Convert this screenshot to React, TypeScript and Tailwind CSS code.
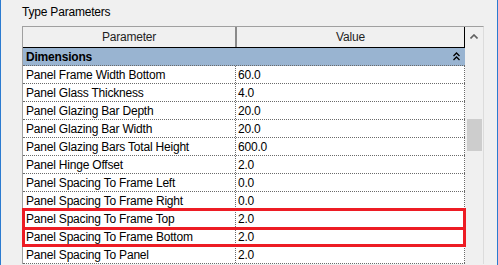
import React from 'react';

const rows = [
  { name: 'Panel Frame Width Bottom', value: '60.0' },
  { name: 'Panel Glass Thickness', value: '4.0' },
  { name: 'Panel Glazing Bar Depth', value: '20.0' },
  { name: 'Panel Glazing Bar Width', value: '20.0' },
  { name: 'Panel Glazing Bars Total Height', value: '600.0' },
  { name: 'Panel Hinge Offset', value: '2.0' },
  { name: 'Panel Spacing To Frame Left', value: '0.0' },
  { name: 'Panel Spacing To Frame Right', value: '0.0' },
  { name: 'Panel Spacing To Frame Top', value: '2.0' },
  { name: 'Panel Spacing To Frame Bottom', value: '2.0' },
  { name: 'Panel Spacing To Panel', value: '2.0' },
];

function CollapseIcon() {
  return (
    <svg width="7" height="9" viewBox="0 0 7 9" className="block">
      <path d="M0.5 4 L3.5 1 L6.5 4" fill="none" stroke="#000" strokeWidth="1.3" />
      <path d="M0.5 8 L3.5 5 L6.5 8" fill="none" stroke="#000" strokeWidth="1.3" />
    </svg>
  );
}

function UpArrow() {
  return (
    <svg width="8" height="5" viewBox="0 0 8 5" className="block">
      <path d="M0.5 4.5 L4 1 L7.5 4.5" fill="none" stroke="#606060" strokeWidth="1.6" />
    </svg>
  );
}

export default function App() {
  return (
    <div
      className="relative w-[498px] h-[265px] overflow-hidden bg-[#f0f0f0] border-x border-[#2b7bd0] text-[12px] tracking-[-0.2px] text-black"
      style={{ fontFamily: '"Liberation Sans", Arial, sans-serif' }}
    >
      {/* Section label */}
      <div className="h-[26px] pl-[21px] pt-[5px] leading-[15px]">Type Parameters</div>

      {/* Properties grid */}
      <div className="ml-[21px] w-[462px] border-l border-t border-r border-l-[#a0a0a0] border-t-[#a0a0a0] border-r-[#dcdcdc] flex">
        <div className="w-[442px] bg-white">
          {/* Header */}
          <div className="flex h-[21px] bg-[#f0f0f0] border-b border-black text-[#1f1f1f]">
            <div className="w-[214px] border-r-2 border-[#8a8a8a] flex items-center justify-center">Parameter</div>
            <div className="w-[228px] border-r border-black flex items-center justify-center">Value</div>
          </div>

          {/* Group row */}
          <div className="flex items-center h-[18px] bg-[#99b4d1] border-b border-dotted border-[#6a6a6a] pl-[3px] pr-[5px] font-bold">
            <span className="flex-1">Dimensions</span>
            <CollapseIcon />
          </div>

          {rows.map((row) => (
            <div key={row.name} className="flex h-[18px] border-b border-dotted border-[#6a6a6a]">
              <div className="w-[213px] border-r border-dotted border-[#6a6a6a] pl-[3px] flex items-center whitespace-nowrap">
                {row.name}
              </div>
              <div className="w-[229px] border-r border-dotted border-[#6a6a6a] pl-[2px] flex items-center">
                {row.value}
              </div>
            </div>
          ))}
        </div>

        {/* Scrollbar */}
        <div className="w-[18px] bg-[#f0f0f0] flex flex-col items-center">
          <div className="h-[17px] w-full flex items-center justify-center pt-[1px]">
            <UpArrow />
          </div>
          <div className="mt-[75px] w-[15px] h-[32px] bg-[#cdcdcd]" />
        </div>
      </div>

      {/* Highlight boxes */}
      <div className="absolute left-[21px] top-[208px] w-[444px] h-[22px] border-[3px] border-[#ed1c24]" />
      <div className="absolute left-[21px] top-[227px] w-[444px] h-[20px] border-[3px] border-[#ed1c24]" />
    </div>
  );
}
